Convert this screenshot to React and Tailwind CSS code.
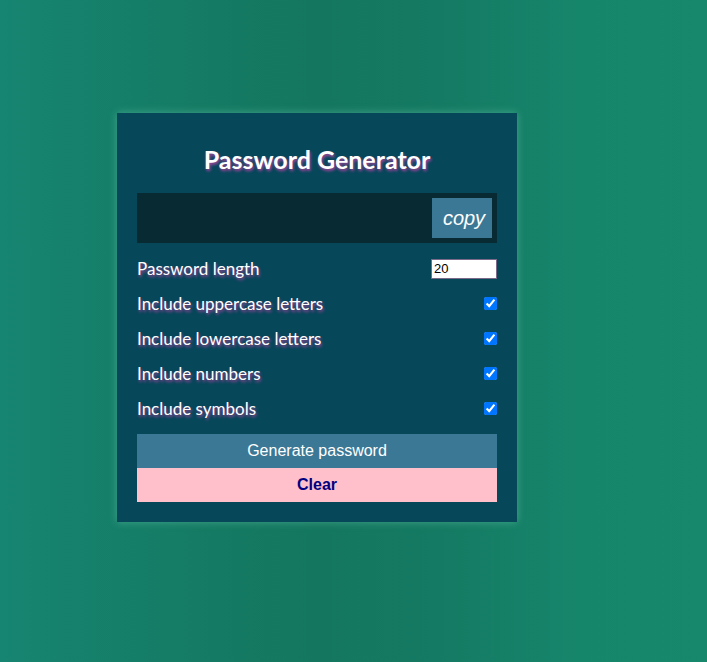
import React from "react";

export default function App() {
  const rows = [
    "Include uppercase letters",
    "Include lowercase letters",
    "Include numbers",
    "Include symbols",
  ];
  const ts = "[text-shadow:1px_2px_3px_#a8459e]";
  return (
    <div className="min-h-[662px] w-full bg-[linear-gradient(to_right,#168571_0%,#157b64_28%,#14765f_45%,#157a63_62%,#16866b_82%,#17886b_100%)] pt-[113px] pl-[117px] [font-family:Lato,'Noto_Sans',sans-serif]">
      <div className="w-[400px] bg-[#06475a] px-[20px] pt-[32px] pb-[20px] shadow-[0_0_8px_rgba(120,210,180,0.45)]">
        <h1 className={`text-center text-[25px] leading-[28px] font-bold text-white mb-[20px] ${ts}`}>
          Password Generator
        </h1>
        <div className="h-[50px] bg-[#072a33] flex items-center justify-end pr-[5px]">
          <button className="w-[60px] h-[40px] bg-[#3b7896] text-white italic text-[20px] pl-[4px] [font-family:'Liberation_Sans',Arial,sans-serif]">
            copy
          </button>
        </div>
        <div className="mt-[8px]">
          <div className="h-[35px] flex items-center justify-between">
            <span className={`text-white text-[17px] ${ts}`}>Password length</span>
            <input
              type="number"
              defaultValue={20}
              className="w-[66px] h-[20px] bg-white border border-[#7a6a8a] text-black text-[13px] px-[2px] [font-family:'Liberation_Sans',Arial,sans-serif] outline-none"
            />
          </div>
          {rows.map((r) => (
            <div key={r} className="h-[35px] flex items-center justify-between">
              <span className={`text-white text-[17px] ${ts}`}>{r}</span>
              <input type="checkbox" defaultChecked className="w-[13px] h-[13px] m-0 accent-[#0075ff]" />
            </div>
          ))}
        </div>
        <button className="mt-[8px] w-full h-[34px] bg-[#3b7896] text-white text-[16px] [font-family:'Liberation_Sans',Arial,sans-serif]">
          Generate password
        </button>
        <button className="w-full h-[34px] bg-[#ffc0cb] text-[#000080] font-bold text-[16px] [font-family:'Liberation_Sans',Arial,sans-serif]">
          Clear
        </button>
      </div>
    </div>
  );
}
